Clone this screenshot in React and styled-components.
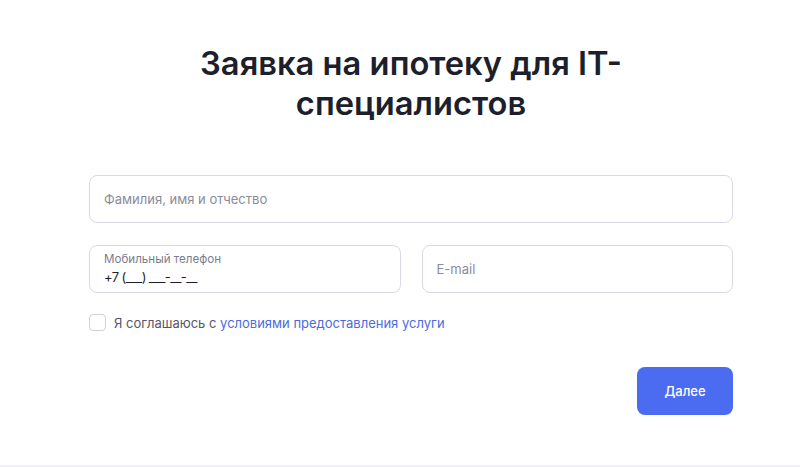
import React, {useState} from 'react';
import styled, {createGlobalStyle} from 'styled-components';

const GlobalStyle = createGlobalStyle`
  html, body {
    margin: 0;
    padding: 0;
    background: #ffffff;
  }
  body {
    font-family: Inter, "Noto Sans", sans-serif;
    color: #1d1f2c;
  }
`;

const Page = styled.div`
  height: 465px;
  border-bottom: 2px solid #f0f0f6;
  display: flex;
  justify-content: center;
  padding-left: 22px;
`;

const Form = styled.form`
  width: 644px;
  padding-top: 43px;
  display: flex;
  flex-direction: column;
`;

const Title = styled.h1`
  margin: 0 0 52px;
  text-align: center;
  font-size: 32.7px;
  line-height: 40px;
  font-weight: 600;
  color: #1d1f2c;
  padding: 0 100px;
`;

const Row = styled.div`
  display: grid;
  grid-template-columns: ${p => p.cols || '1fr'};
  gap: 21px;
  margin-bottom: 22px;
`;

const Field = styled.label`
  box-sizing: border-box;
  height: 48px;
  border: 1px solid #d9d9e8;
  border-radius: 8px;
  padding: 0 14px;
  display: flex;
  flex-direction: column;
  justify-content: center;
  background: #fff;
`;

const FieldLabel = styled.span`
  font-size: 11.6px;
  line-height: 14px;
  color: #7c7d8c;
  margin-bottom: 3px;
`;

const Input = styled.input`
  border: none;
  outline: none;
  padding: 0;
  font-family: inherit;
  font-size: 13px;
  line-height: 17px;
  color: #1d1f2c;
  background: transparent;
  letter-spacing: ${p => (p.mask ? '-0.6px' : '0')};
  &::placeholder {
    color: #8a8b9a;
  }
`;

const Agree = styled.label`
  display: flex;
  align-items: center;
  gap: 8px;
  font-size: 13px;
  color: #55566a;
  margin-top: -1px;
`;

const Box = styled.span`
  box-sizing: border-box;
  width: 17px;
  height: 17px;
  border: 1px solid #cfcfe0;
  border-radius: 4px;
  background: ${p => (p.checked ? '#4a6cf0' : '#fff')};
`;

const Link = styled.a`
  color: #4a6ce0;
  text-decoration: none;
`;

const Actions = styled.div`
  display: flex;
  justify-content: flex-end;
  margin-top: 36px;
`;

const Button = styled.button`
  width: 96px;
  height: 48px;
  border: none;
  border-radius: 8px;
  background: #4b6cf0;
  color: #fff;
  font-family: inherit;
  font-size: 13px;
  font-weight: 500;
  cursor: pointer;
`;

export default function App() {
  const [checked, setChecked] = useState(false);
  return (
    <>
      <GlobalStyle />
      <Page>
        <Form onSubmit={e => e.preventDefault()}>
          <Title>Заявка на ипотеку для IT-специалистов</Title>
          <Row>
            <Field>
              <Input placeholder='Фамилия, имя и отчество' />
            </Field>
          </Row>
          <Row cols='1fr 1fr'>
            <Field>
              <FieldLabel>Мобильный телефон</FieldLabel>
              <Input mask defaultValue='+7 (___) ___-__-__' />
            </Field>
            <Field>
              <Input placeholder='E-mail' />
            </Field>
          </Row>
          <Agree onClick={() => setChecked(!checked)}>
            <Box checked={checked} />
            <span>Я соглашаюсь с <Link href='#'>условиями предоставления услуги</Link></span>
          </Agree>
          <Actions>
            <Button type='submit'>Далее</Button>
          </Actions>
        </Form>
      </Page>
    </>
  );
}
